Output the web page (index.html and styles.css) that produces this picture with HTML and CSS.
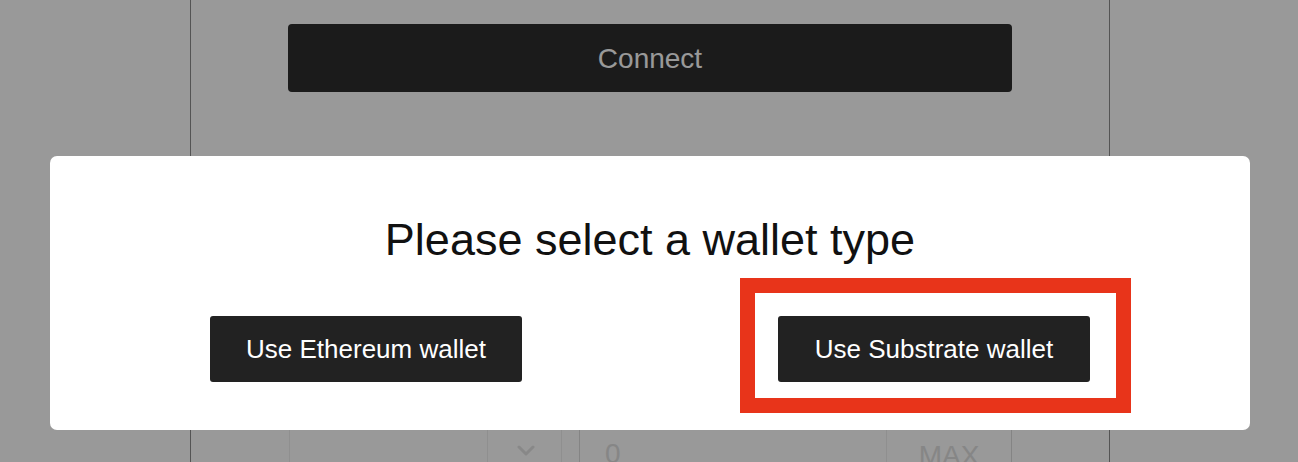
FILE: index.html
```html
<!DOCTYPE html>
<html lang="en">
<head>
<meta charset="utf-8">
<title>Select wallet</title>
<link rel="stylesheet" href="styles.css">
</head>
<body>
<div class="page">
  <main class="card">
    <button class="connect">Connect</button>
    <div class="swap-row">
      <div class="select">
        <span class="select-value"></span>
        <span class="select-sep"></span>
        <span class="select-arrow">
          <svg width="20" height="12" viewBox="0 0 20 12"><path d="M3 2 L10 9 L17 2" fill="none" stroke="currentColor" stroke-width="3" stroke-linecap="round" stroke-linejoin="round"/></svg>
        </span>
      </div>
      <div class="amount">
        <span class="amount-value">0</span>
        <button class="max">MAX</button>
      </div>
    </div>
  </main>
</div>

<div class="overlay">
  <div class="modal" role="dialog">
    <h2 class="modal-title">Please select a wallet type</h2>
    <div class="modal-actions">
      <button class="wallet-btn">Use Ethereum wallet</button>
      <button class="wallet-btn">Use Substrate wallet</button>
    </div>
    <div class="highlight"></div>
  </div>
</div>
</body>
</html>
```

FILE: styles.css
```css
* { box-sizing: border-box; }

html, body {
  margin: 0;
  height: 100%;
  overflow: hidden;
  background: #ffffff;
  font-family: "Liberation Sans", Arial, sans-serif;
}

.page {
  display: flex;
  justify-content: center;
  height: 100%;
  padding-left: 2px;
}

.card {
  width: 920px;
  height: 100%;
  border-left: 1px solid #8c8c8c;
  border-right: 1px solid #8c8c8c;
  display: flex;
  flex-direction: column;
  align-items: center;
  padding-top: 24px;
}

.connect {
  flex-shrink: 0;
  width: 724px;
  height: 68px;
  border: none;
  border-radius: 4px;
  background: #2d2d2d;
  color: #ffffff;
  font-family: "Liberation Sans", Arial, sans-serif;
  font-size: 28px;
  padding-top: 2px;
}

.swap-row {
  flex-shrink: 0;
  margin-top: 330px;
  width: 723px;
  margin-left: 1px;
  height: 60px;
  display: flex;
  gap: 17px;
}

.select {
  width: 273px;
  display: flex;
  border: 1px solid #eeeeee;
  border-radius: 4px;
}

.select-value { flex: 1; }

.select-sep {
  width: 1px;
  background: #eeeeee;
}

.select-arrow {
  width: 73px;
  display: flex;
  align-items: center;
  justify-content: center;
  color: #e3e3e3;
  padding-left: 2px;
  padding-bottom: 2px;
}

.amount {
  flex: 1;
  display: flex;
  border: 1px solid #dddddd;
  border-radius: 4px;
}

.amount-value {
  flex: 1;
  padding: 15px 0 0 25px;
  font-size: 28px;
  color: #e0e0e0;
}

.max {
  width: 125px;
  border: none;
  border-left: 1px solid #eeeeee;
  background: transparent;
  color: #e0e0e0;
  font-family: "Liberation Sans", Arial, sans-serif;
  font-size: 28px;
  align-self: flex-start;
  height: 60px;
  line-height: 36px;
  padding: 5px 0 0;
}

.overlay {
  position: fixed;
  inset: 0;
  background: rgba(0, 0, 0, 0.4);
  display: flex;
  justify-content: center;
  align-items: flex-start;
  padding-top: 156px;
  padding-left: 2px;
}

.modal {
  position: relative;
  width: 1200px;
  height: 274px;
  background: #ffffff;
  border-radius: 7px;
  display: flex;
  flex-direction: column;
  align-items: center;
  padding-top: 56px;
}

.modal-title {
  margin: 0;
  font-weight: 400;
  font-size: 45px;
  line-height: 56px;
  color: #111111;
}

.modal-actions {
  margin-top: 48px;
  display: flex;
  gap: 256px;
}

.wallet-btn {
  width: 312px;
  height: 66px;
  border: none;
  border-radius: 3px;
  background: #222222;
  color: #ffffff;
  font-family: "Liberation Sans", Arial, sans-serif;
  font-size: 26px;
}

.highlight {
  position: absolute;
  left: 690px;
  top: 122px;
  width: 391px;
  height: 135px;
  border: 15px solid #e8341a;
  pointer-events: none;
}
```
